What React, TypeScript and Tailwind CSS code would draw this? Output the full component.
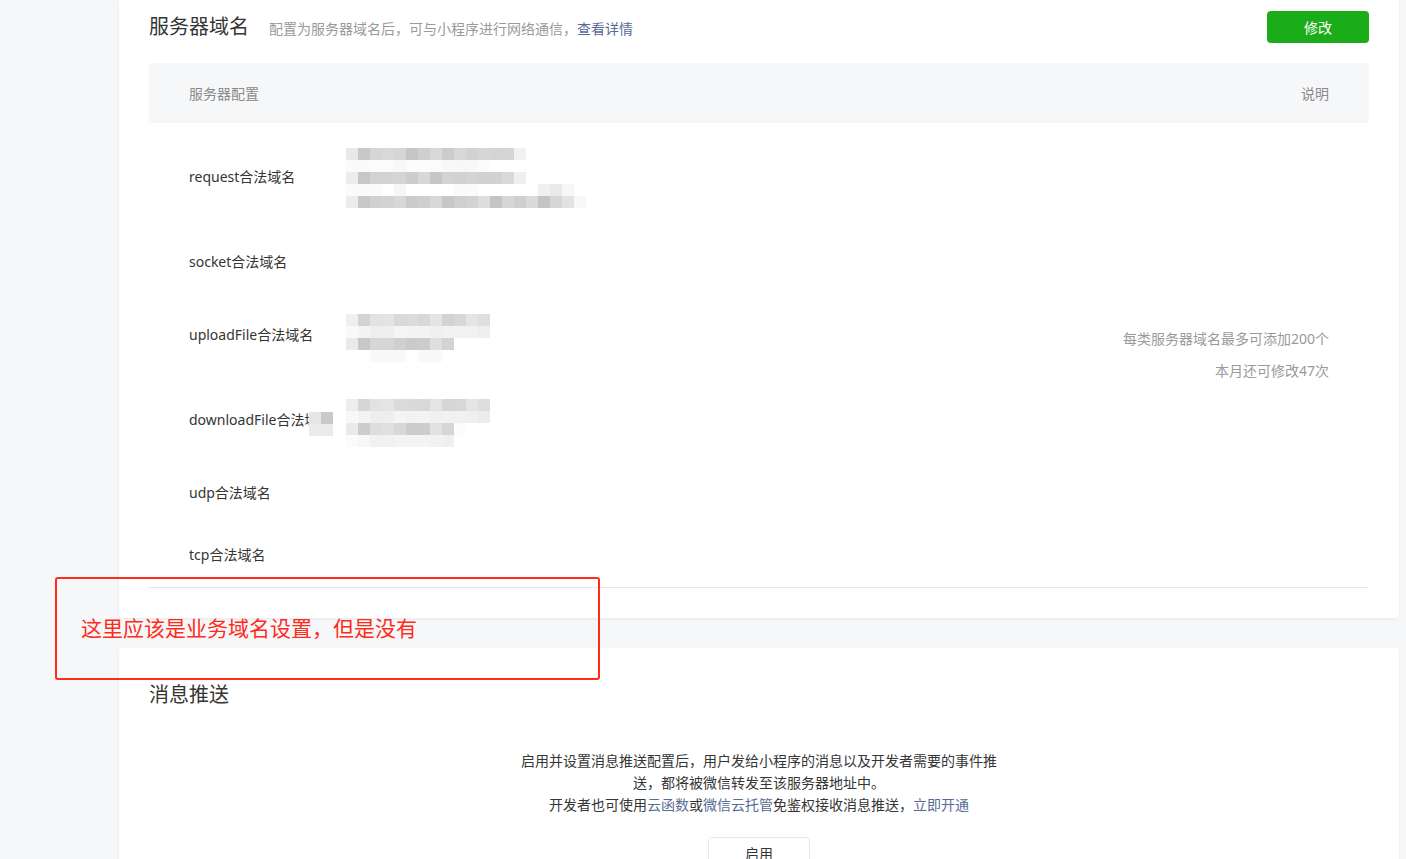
import React from "react"

const REQUEST = [
  "e8 c8 d6 d9 d6 c6 cf d9 cc d8 d2 d6 d4 d5 f1",
  "fa fa fb fb f8 fb fb fb f8 f7 f8 fc",
  "ec c7 d3 d3 d4 cd d8 c6 d3 d1 d4 d2 d2 d9 ef",
  "fa fa fa fe f6 ff ff ff ff fa fa ff ff ff ff ff f0 e9 f7",
  "ec c8 d1 d3 d8 cb ce d8 c7 cf d3 dd c4 d6 cf da c4 d6 e2 f8",
]

const UPLOAD = [
  "ef d3 e2 e4 d9 db d8 e4 d3 d7 e5 df",
  "f9 f4 ee ee f5 f4 f3 f0 f2 f1 f1 ee",
  "ea c8 d6 d6 d0 cb cc df d3",
  "ff ff f9 f9 f9 ff f9 f9",
]

const DOWNLOAD = [
  "ed d6 e2 e4 db da d9 e4 d6 d7 e5 de",
  "f8 f3 ee ee f4 f2 f3 f0 f1 f1 ef ec",
  "ea cd dd e0 d8 cc cd e2 d6 fb",
  "fb f7 f1 f1 f3 f4 f4 f2 f0",
]

function Mosaic({ rows, className }: { rows: string[]; className?: string }) {
  return (
    <div className={`flex flex-col ${className ?? ""}`}>
      {rows.map((r, i) => (
        <div key={i} className="flex h-3">
          {r.split(" ").map((c, j) => (
            <div key={j} className="w-3 h-3" style={{ backgroundColor: `#${c}${c}${c}` }} />
          ))}
        </div>
      ))}
    </div>
  )
}

const rows = [
  { label: "request合法域名", h: "h-[106px]", mosaic: REQUEST, shift: "mt-1" },
  { label: "socket合法域名", h: "h-[64px]" },
  { label: "uploadFile合法域名", h: "h-[82px]", mosaic: UPLOAD, shift: "mt-2" },
  { label: "downloadFile合法域名", h: "h-[88px]", mosaic: DOWNLOAD, shift: "mt-2", cover: true },
  { label: "udp合法域名", h: "h-[58px]" },
  { label: "tcp合法域名", h: "h-[66px]" },
]

export default function App() {
  return (
    <div className="relative h-[859px] overflow-hidden bg-[#f6f7f9] font-['Noto_Sans','Noto_Sans_CJK_SC',sans-serif] text-[14px] text-[#353535]">
      <div className="ml-[119px] mr-[7px] flex flex-col gap-[30px]">
        {/* 服务器域名 */}
        <section className="bg-white rounded-b-[4px] shadow-[0_1px_3px_rgba(0,0,0,0.06)] px-[30px] pt-[11px] pb-[30px]">
          <div className="flex items-center justify-between h-8">
            <div className="flex items-center gap-5">
              <h2 className="text-[20px] leading-7 font-normal text-[#353535]">服务器域名</h2>
              <p className="text-[14px] leading-5 text-[#9a9a9a] pt-[3px]">
                配置为服务器域名后，可与小程序进行网络通信，<a className="text-[#576b95]">查看详情</a>
              </p>
            </div>
            <button className="w-[102px] h-8 rounded-[4px] bg-[#1aad19] text-white text-[14px]">修改</button>
          </div>

          <div className="mt-5 flex items-center justify-between h-[60px] bg-[#f6f7f9] px-10 text-[#8a8a8a]">
            <span>服务器配置</span>
            <span>说明</span>
          </div>

          <div className="flex border-b border-[#e7e7eb]">
            <div className="flex-1 flex flex-col">
              {rows.map((r) => (
                <div key={r.label} className={`flex items-center pl-10 ${r.h}`}>
                  <div className="relative w-[157px] leading-5 mt-[2px]">
                    {r.label}
                    {r.cover && (
                      <div className="absolute left-[120px] top-[2px]">
                        <Mosaic rows={["e6 c9", "eb eb"]} />
                      </div>
                    )}
                  </div>
                  {r.mosaic && <Mosaic rows={r.mosaic} className={r.shift} />}
                </div>
              ))}
            </div>
            <div className="flex flex-col items-end justify-center pr-10 text-[#9a9a9a] leading-8">
              <p>每类服务器域名最多可添加200个</p>
              <p>本月还可修改47次</p>
            </div>
          </div>
        </section>

        {/* 消息推送 */}
        <section className="bg-white rounded-[4px] shadow-[0_1px_3px_rgba(0,0,0,0.06)] px-[30px] pt-[31px] pb-10">
          <div className="flex items-center h-8">
            <h2 className="text-[20px] leading-7 font-normal">消息推送</h2>
          </div>
          <div className="mt-[39px] mx-auto w-[482px] text-center leading-[22px]">
            <p>启用并设置消息推送配置后，用户发给小程序的消息以及开发者需要的事件推送，都将被微信转发至该服务器地址中。</p>
            <p>
              开发者也可使用<a className="text-[#576b95]">云函数</a>或<a className="text-[#576b95]">微信云托管</a>
              免鉴权接收消息推送，<a className="text-[#576b95]">立即开通</a>
            </p>
          </div>
          <div className="mt-[21px] flex justify-center">
            <button className="w-[102px] h-8 rounded-[4px] border border-[#e4e8eb] bg-white text-[14px] text-[#353535]">
              启用
            </button>
          </div>
        </section>
      </div>

      {/* annotation */}
      <div className="absolute left-[55px] top-[577px] w-[545px] h-[103px] border-2 border-[#ff2b1c] rounded-[3px] flex items-center pl-[24px]">
        <span className="text-[21px] leading-7 text-[#ff2b1c] -mt-[2px]">这里应该是业务域名设置，但是没有</span>
      </div>
    </div>
  )
}
